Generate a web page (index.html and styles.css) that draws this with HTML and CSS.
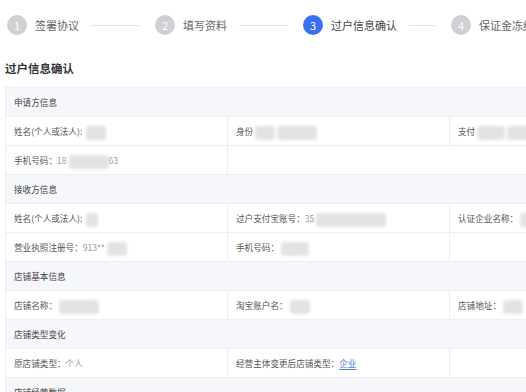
FILE: index.html
```html
<!DOCTYPE html>
<html lang="zh-CN">
<head>
    <meta charset="UTF-8">
    <title>过户信息确认</title>
    <link rel="stylesheet" href="styles.css">
</head>
<body>
    <div class="page">
        <div class="steps">
            <div class="step">
                <span class="step-num">1</span>
                <span class="step-title">签署协议</span>
                <span class="step-line"></span>
            </div>
            <div class="step">
                <span class="step-num">2</span>
                <span class="step-title">填写资料</span>
                <span class="step-line"></span>
            </div>
            <div class="step active">
                <span class="step-num">3</span>
                <span class="step-title">过户信息确认</span>
                <span class="step-line"></span>
            </div>
            <div class="step">
                <span class="step-num">4</span>
                <span class="step-title">保证金冻结</span>
                <span class="step-line"></span>
            </div>
        </div>

        <h2 class="title">过户信息确认</h2>

        <div class="info-table">
            <div class="section">申请方信息</div>
            <div class="cell">姓名(个人或法人): <span class="mask mask-s"></span></div>
            <div class="cell">身份<span class="mask mask-s"></span><span class="mask mask-l"></span></div>
            <div class="cell">支付<span class="mask mask-m"></span><span class="mask mask-m"></span></div>
            <div class="cell">手机号码：<span class="val">18</span><span class="mask mask-l"></span><span class="val">63</span></div>
            <div class="cell span-2"></div>

            <div class="section">接收方信息</div>
            <div class="cell">姓名(个人或法人): <span class="mask mask-xs"></span></div>
            <div class="cell">过户支付宝账号：<span class="val">35</span><span class="mask mask-xl"></span></div>
            <div class="cell">认证企业名称：<span class="mask mask-m"></span></div>
            <div class="cell">营业执照注册号：<span class="val">913**</span><span class="mask mask-s"></span></div>
            <div class="cell">手机号码：<span class="mask mask-m"></span></div>
            <div class="cell"></div>

            <div class="section">店铺基本信息</div>
            <div class="cell">店铺名称：<span class="mask mask-l"></span></div>
            <div class="cell">淘宝账户名：<span class="mask mask-s"></span></div>
            <div class="cell">店铺地址：<span class="mask mask-s"></span></div>

            <div class="section">店铺类型变化</div>
            <div class="cell">原店铺类型：<span class="val">个人</span></div>
            <div class="cell">经营主体变更后店铺类型：<a class="link">企业</a></div>
            <div class="cell"></div>

            <div class="section">店铺经营数据</div>
        </div>
    </div>
</body>
</html>
```

FILE: styles.css
```css
body {
    margin: 0;
    background: #fff;
    font-family: "Noto Sans CJK SC", "Noto Sans", sans-serif;
    color: #555;
    overflow: hidden;
}
.page {
    padding: 0 5px;
}
.steps {
    display: flex;
    align-items: center;
    height: 50px;
    padding-left: 2px;
}
.step {
    flex: 0 0 148px;
    display: flex;
    align-items: center;
}
.step-num {
    flex: 0 0 20px;
    width: 20px;
    height: 20px;
    border-radius: 50%;
    background: #cfd0d3;
    color: #fff;
    font-size: 11px;
    line-height: 20px;
    text-align: center;
}
.step.active .step-num {
    background: #3a6ff0;
}
.step-title {
    margin-left: 8px;
    font-size: 11px;
    color: #666;
    white-space: nowrap;
}
.step.active .step-title {
    color: #444;
}
.step-line {
    flex: 1;
    height: 1px;
    margin: 0 15px 0 12px;
    background: #e2e3e6;
}
.title {
    margin: 10px 0 11px;
    font-size: 11.5px;
    font-weight: bold;
    color: #333;
    line-height: 16px;
}
.info-table {
    display: grid;
    grid-template-columns: 222px 222px 222px;
    border-left: 1px solid #ebeef5;
    border-top: 1px solid #ebeef5;
    width: 667px;
}
.section {
    grid-column: 1 / -1;
    height: 29px;
    box-sizing: border-box;
    padding: 0 8px;
    background: #f5f7fa;
    border-bottom: 1px solid #ebeef5;
    font-size: 8.6px;
    line-height: 28px;
    color: #444;
}
.cell {
    height: 29px;
    box-sizing: border-box;
    padding: 0 8px;
    border-bottom: 1px solid #ebeef5;
    border-right: 1px solid #ebeef5;
    font-size: 8.6px;
    line-height: 28px;
    white-space: nowrap;
    overflow: hidden;
    color: #555;
}
.span-2 {
    grid-column: span 2;
}
.val {
    color: #999;
}
.link {
    color: #4f7ad6;
    text-decoration: underline;
    text-underline-offset: 2px;
}
.mask {
    display: inline-block;
    height: 14px;
    margin-left: 2px;
    vertical-align: middle;
    background: #e3e3e6;
    border-radius: 3px;
    filter: blur(1.5px);
}
.mask-xs { width: 12px; }
.mask-s { width: 20px; }
.mask-m { width: 28px; }
.mask-l { width: 40px; }
.mask-xl { width: 70px; }
```
